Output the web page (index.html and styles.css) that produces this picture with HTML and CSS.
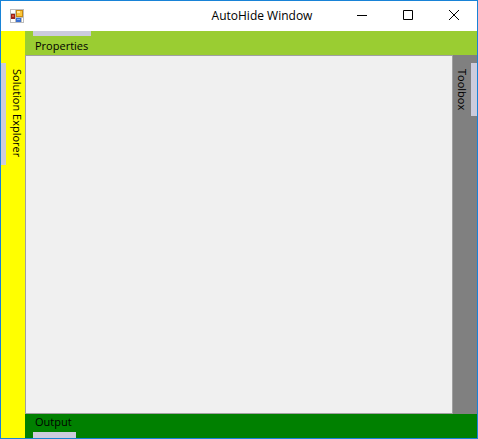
FILE: index.html
```html
<!DOCTYPE html>
<html lang="en">
<head>
<meta charset="utf-8">
<title>AutoHide Window</title>
<link rel="stylesheet" href="styles.css">
</head>
<body>
<div class="window">
  <header class="titlebar">
    <svg class="app-icon" viewBox="0 0 14 14" shape-rendering="crispEdges" aria-hidden="true">
      <path fill="#bdbdbd" d="M0 0h14v14H0z"/>
      <path fill="#fff" d="M1 1h4v3H1zM1 10h4v3H1zM12 9h1v4h-1z"/>
      <path fill="#9c2018" d="M1 5h4v5H1z"/>
      <path fill="#d8503c" d="M2 6h2v2H2z"/>
      <path fill="#c98a10" d="M6 1h7v7H6z"/>
      <path fill="#fbc63a" d="M7 2h5v5H7z"/>
      <path fill="#ffe79a" d="M7 2h3v2H7z"/>
      <path fill="#3a6fd0" d="M6 9h5v4H6z"/>
      <path fill="#7fb0f5" d="M7 10h3v1H7z"/>
    </svg>
    <h1 class="title">AutoHide Window</h1>
    <div class="controls">
      <button class="control" type="button" aria-label="Minimize"><svg viewBox="0 0 10 10"><path d="M0 5.5h10"/></svg></button>
      <button class="control" type="button" aria-label="Maximize"><svg viewBox="0 0 10 10"><path d="M.5 .5h9v9h-9z"/></svg></button>
      <button class="control" type="button" aria-label="Close"><svg viewBox="0 0 10 10"><path d="M0 0l10 10M10 0L0 10"/></svg></button>
    </div>
  </header>
  <main class="dock">
    <nav class="strip left"><button class="tab" type="button">Solution Explorer</button></nav>
    <nav class="strip top"><button class="tab" type="button">Properties</button></nav>
    <section class="client"></section>
    <nav class="strip right"><button class="tab" type="button">Toolbox</button></nav>
    <nav class="strip bottom"><button class="tab" type="button">Output</button></nav>
  </main>
</div>
</body>
</html>
```
FILE: styles.css
```css
* {
  box-sizing: border-box;
}

body {
  margin: 0;
  font: 11px/16px "Open Sans", "Noto Sans", sans-serif;
  color: #000;
}

.window {
  display: flex;
  flex-direction: column;
  min-height: 100vh;
  border: 1px solid #1883d7;
  background: #fff;
}

.titlebar {
  display: grid;
  grid-template-columns: 1fr auto 1fr;
  align-items: center;
  height: 30px;
}

.app-icon {
  width: 14px;
  height: 14px;
  margin-left: 9px;
}

.title {
  margin: 0;
  padding-left: 46px;
  font-size: 12px;
  font-weight: 400;
}

.controls {
  display: flex;
  justify-content: flex-end;
}

.control {
  display: grid;
  place-items: center;
  width: 46px;
  height: 30px;
  padding: 0 0 2px;
  border: 0;
  background: none;
}

.control svg {
  width: 10px;
  height: 10px;
  fill: none;
  stroke: #000;
}

.dock {
  flex: 1;
  display: grid;
  grid-template: 24px 1fr 24px / 24px 1fr 24px;
  grid-template-areas:
    "left top top"
    "left client right"
    "left bottom bottom";
}

.strip {
  display: flex;
}

.left {
  grid-area: left;
  align-items: flex-start;
  padding-top: 32px;
  background: #ffff00;
}

.top {
  grid-area: top;
  padding-left: 8px;
  background: #9acd32;
}

.right {
  grid-area: right;
  align-items: flex-start;
  padding-top: 8px;
  background: #808080;
}

.bottom {
  grid-area: bottom;
  padding-left: 8px;
  background: #008000;
}

.client {
  grid-area: client;
  border: 1px solid #a0a0a0;
  background: #f0f0f0;
}

.tab {
  border: 0 solid #ccccdd;
  padding: 0;
  background: none;
  color: inherit;
  font: inherit;
  white-space: nowrap;
}

.top .tab {
  padding: 0 3px 0 2px;
  border-top-width: 5px;
}

.bottom .tab {
  padding: 0 4px 2px 2px;
  border-bottom-width: 6px;
}

.left .tab,
.right .tab {
  width: 24px;
  padding: 6px 0;
  writing-mode: vertical-rl;
}

.left .tab {
  padding-left: 2px;
  padding-bottom: 8px;
  border-left-width: 5px;
}

.right .tab {
  border-right-width: 6px;
}
```
